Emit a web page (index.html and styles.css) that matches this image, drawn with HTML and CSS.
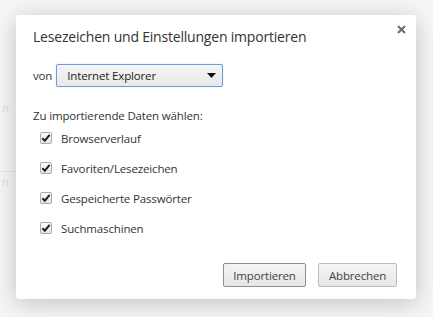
FILE: index.html
```html
<!DOCTYPE html>
<html lang="de">
<head>
    <meta charset="UTF-8">
    <meta name="viewport" content="width=device-width, initial-scale=1.0">
    <title>Lesezeichen und Einstellungen importieren</title>
    <link rel="stylesheet" href="styles.css">
</head>
<body>
    <div class="backdrop">
        <span class="ghost ghost-top">n</span>
        <span class="ghost ghost-field">n</span>
    </div>
    <div class="dialog">
        <button class="close" aria-label="Schließen">
            <svg width="9" height="9" viewBox="0 0 9 9">
                <path d="M1 1 L8 8 M8 1 L1 8" stroke="#6b6b6b" stroke-width="2"/>
            </svg>
        </button>
        <h1 class="title">Lesezeichen und Einstellungen importieren</h1>
        <div class="source-row">
            <span>von</span>
            <div class="select">
                <span>Internet Explorer</span>
                <svg width="9" height="5" viewBox="0 0 9 5"><path d="M0 0 H9 L4.5 5 Z" fill="#111"/></svg>
            </div>
        </div>
        <p class="section-label">Zu importierende Daten wählen:</p>
        <ul class="options">
            <li><span class="check"><svg width="11" height="10" viewBox="0 0 11 10"><path d="M1.5 5.2 L4.2 8 L9.5 1.5" stroke="#222" stroke-width="2.2" fill="none"/></svg></span>Browserverlauf</li>
            <li><span class="check"><svg width="11" height="10" viewBox="0 0 11 10"><path d="M1.5 5.2 L4.2 8 L9.5 1.5" stroke="#222" stroke-width="2.2" fill="none"/></svg></span>Favoriten/Lesezeichen</li>
            <li><span class="check"><svg width="11" height="10" viewBox="0 0 11 10"><path d="M1.5 5.2 L4.2 8 L9.5 1.5" stroke="#222" stroke-width="2.2" fill="none"/></svg></span>Gespeicherte Passwörter</li>
            <li><span class="check"><svg width="11" height="10" viewBox="0 0 11 10"><path d="M1.5 5.2 L4.2 8 L9.5 1.5" stroke="#222" stroke-width="2.2" fill="none"/></svg></span>Suchmaschinen</li>
        </ul>
        <div class="actions">
            <button class="btn">Importieren</button>
            <button class="btn">Abbrechen</button>
        </div>
    </div>
</body>
</html>
```

FILE: styles.css
```css
body {
    font-family: "Open Sans", "Noto Sans", Arial, sans-serif;
    background-color: #f6f6f6;
    margin: 0;
    padding: 15px 0 0 16px;
    color: #333;
    font-size: 11.5px;
    letter-spacing: -0.15px;
    height: 317px;
    box-sizing: border-box;
    position: relative;
    overflow: hidden;
}

.backdrop {
    position: absolute;
    left: 0;
    top: 0;
    width: 16px;
    height: 317px;
}

.ghost {
    position: absolute;
    left: 2px;
    color: #ddd;
    font-size: 11px;
}

.ghost-top {
    top: 100px;
}

.ghost-field {
    border-top: 1px solid #e6e6e6;
    width: 14px;
    padding-top: 2px;
    top: 171px;
}

.dialog {
    position: relative;
    width: 400px;
    height: 284px;
    box-sizing: border-box;
    background: #fff;
    border-radius: 3px;
    box-shadow: 0 4px 23px rgba(0, 0, 0, 0.22);
    padding: 12px 19px 0 17px;
    display: flex;
    flex-direction: column;
}

.close {
    position: absolute;
    top: 10px;
    right: 10px;
    border: none;
    background: none;
    padding: 0;
    width: 9px;
    height: 9px;
    cursor: pointer;
}

.close svg {
    display: block;
}

.title {
    font-size: 14px;
    letter-spacing: -0.2px;
    font-weight: normal;
    line-height: 20px;
    margin: 0;
    color: #333;
}

.source-row {
    display: flex;
    align-items: center;
    gap: 4px;
    margin-top: 17px;
}

.select {
    width: 167px;
    height: 23px;
    box-sizing: border-box;
    border: 1px solid #6c9be3;
    border-radius: 2px;
    background: linear-gradient(#f5f5f5, #e8e8e8);
    box-shadow: 0 0 1px rgba(77, 144, 254, 0.5);
    display: flex;
    align-items: center;
    justify-content: space-between;
    padding: 0 6px 0 10px;
    color: #222;
}

.section-label {
    margin: 21px 0 0;
    line-height: 15px;
}

.options {
    list-style: none;
    margin: 7px 0 0;
    padding: 0 0 0 7px;
    display: flex;
    flex-direction: column;
    gap: 14px;
}

.options li {
    display: flex;
    align-items: center;
    height: 16px;
    color: #333;
}

.check {
    width: 12px;
    height: 12px;
    box-sizing: border-box;
    border: 1px solid #a9a9a9;
    border-radius: 2px;
    background: linear-gradient(#fdfdfd, #e6e6e6);
    margin-right: 9px;
    display: flex;
    align-items: center;
    justify-content: center;
}

.check svg {
    display: block;
}

.actions {
    margin-top: auto;
    margin-bottom: 12px;
    display: flex;
    justify-content: flex-end;
    gap: 12px;
}

.btn {
    font-family: inherit;
    font-size: 11.5px;
    letter-spacing: -0.15px;
    color: #444;
    height: 24px;
    padding: 0 8px;
    border: 1px solid #bcbcbc;
    border-radius: 2px;
    background: linear-gradient(#f4f4f4, #e7e7e7);
    cursor: pointer;
}

.btn:first-child {
    border-color: #8f8f8f;
    width: 83px;
}

.btn:last-child {
    width: 79px;
}
```
